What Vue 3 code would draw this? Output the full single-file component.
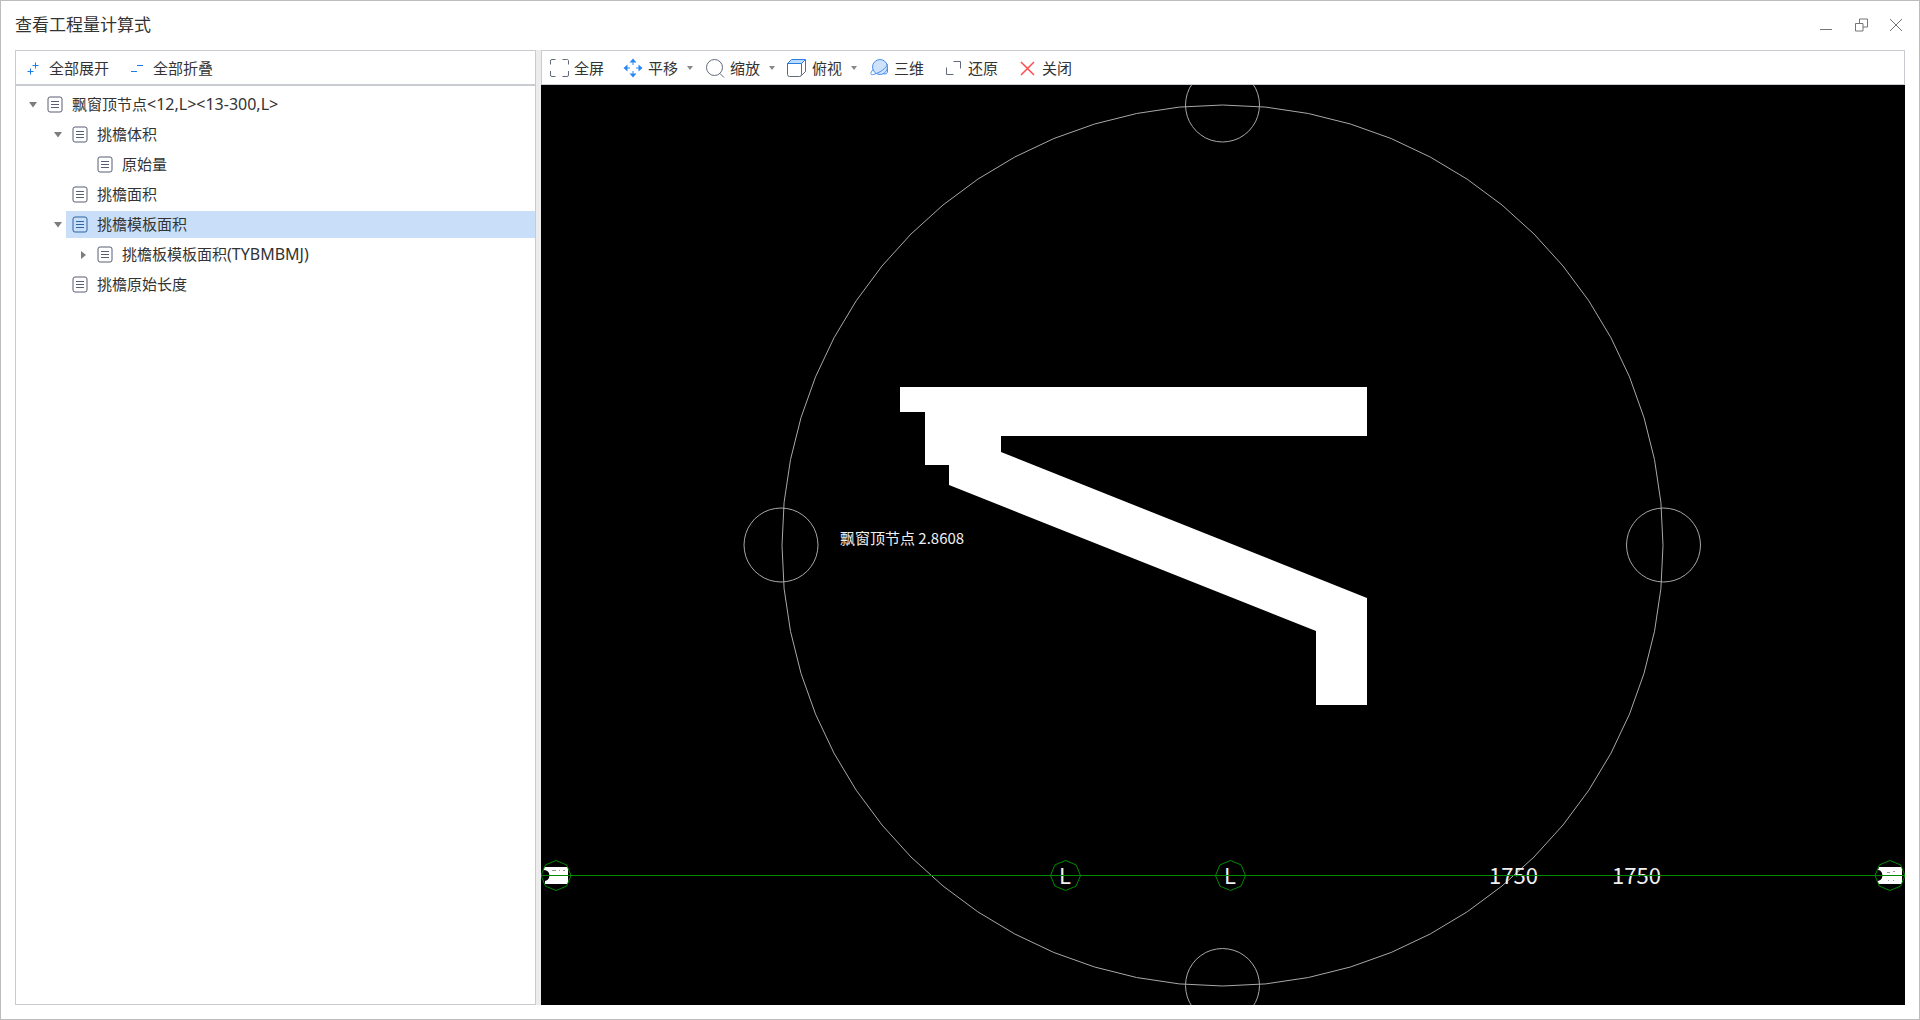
<script setup>
import { ref } from 'vue'

const tree = ref([
  { text: '飘窗顶节点', code: '<12,L><13-300,L>', level: 0, state: 'open' },
  { text: '挑檐体积', level: 1, state: 'open' },
  { text: '原始量', level: 2, state: 'leaf' },
  { text: '挑檐面积', level: 1, state: 'leaf' },
  { text: '挑檐模板面积', level: 1, state: 'open' },
  { text: '挑檐板模板面积', code: '(TYBMBMJ)', level: 2, state: 'closed' },
  { text: '挑檐原始长度', level: 1, state: 'leaf' },
])
const selected = ref(4)

// The viewport draws its orbit rings as regular polygons.
function ring(cx, cy, r, sides) {
  const pts = []
  for (let i = 0; i < sides; i++) {
    const a = (i * 2 * Math.PI) / sides
    pts.push(`${(cx + r * Math.cos(a)).toFixed(1)},${(cy + r * Math.sin(a)).toFixed(1)}`)
  }
  return pts.join(' ')
}

const handles = [
  [681.5, 20],
  [681.5, 900.5],
  [240, 460],
  [1122.5, 460],
]
const axisMarks = [15, 524.5, 689.5, 1349]
</script>

<template>
  <div class="window">
    <header class="titlebar">
      <h1>查看工程量计算式</h1>
      <div class="winbtns">
        <button aria-label="最小化">
          <svg width="14" height="14" viewBox="0 0 14 14"><path d="M1 11.5H13" /></svg>
        </button>
        <button aria-label="还原窗口">
          <svg width="14" height="14" viewBox="0 0 14 14"><path d="M1.500 5.500h7.500v7.500h-7.500zM5.500 5.500v-4.500h8v8h-4.500" /></svg>
        </button>
        <button aria-label="关闭窗口">
          <svg width="14" height="14" viewBox="0 0 14 14"><path d="M1 1L13 13M13 1L1 13" /></svg>
        </button>
      </div>
    </header>

    <main class="body">
      <aside class="side">
        <div class="toolbar">
          <button class="tool">
            <svg class="ico blue" viewBox="0 0 20 20"><path d="M8.500 7.500h6M11.500 4.500v6M3.500 13.500h6M6.500 10.500v6" /></svg>
            全部展开
          </button>
          <button class="tool">
            <svg class="ico blue" viewBox="0 0 20 20"><path d="M9 7.500h6M3 13.500h6" /></svg>
            全部折叠
          </button>
        </div>
        <ul class="tree" role="tree">
          <li
            v-for="(n, i) in tree"
            :key="i"
            role="treeitem"
            :class="['lv' + n.level, { selected: i === selected }]"
            :aria-selected="i === selected"
            @click="selected = i"
          >
            <span class="twist">
              <svg v-if="n.state === 'open'" width="8" height="6" viewBox="0 0 8 6"><path d="M0 0H8L4 5.500Z" /></svg>
              <svg v-else-if="n.state === 'closed'" width="8" height="8" viewBox="0 0 8 8"><path d="M2 0V8L7 4Z" /></svg>
            </span>
            <span class="node">
              <svg class="doc" width="16" height="17" viewBox="0 0 16 17">
                <rect x="1" y="1" width="14" height="15" rx="2" />
                <path d="M4 5.500H12M4 8.500H12M4 11.500H12" />
              </svg>
              <span class="name">{{ n.text }}<span v-if="n.code" class="code">{{ n.code }}</span></span>
            </span>
          </li>
        </ul>
      </aside>

      <section class="view">
        <div class="toolbar">
          <button class="tool">
            <svg class="ico" viewBox="0 0 20 20"><path d="M1.500 6.500V3A1.500 1.500 0 0 1 3 1.500H6.500M13.500 1.500H17.500A1.500 1.500 0 0 1 19.500 3V6.500M19.500 13V17a1.500 1.500 0 0 1-1.500 1.500H13.500M6.500 18.500H3A1.500 1.500 0 0 1 1.500 17V13" /></svg>
            全屏
          </button>
          <button class="tool menu">
            <svg class="ico pan" viewBox="0 0 20 20">
              <path class="f" d="M10 0.500L13.500 4.500H6.500ZM10 19.500L6.500 15.500H13.500ZM0.500 10L4.500 6.500V13.500ZM19.500 10L15.500 13.500V6.500Z" />
              <path d="M10 4v3M10 13v3M4 10h3M13 10h3" />
            </svg>
            平移
            <svg class="drop" viewBox="0 0 6 4"><path d="M0 0H6L3 4Z" /></svg>
          </button>
          <button class="tool menu">
            <svg class="ico" viewBox="0 0 20 20"><circle cx="9.500" cy="9.500" r="8" /><path d="M15 15.500L19 19.500" /></svg>
            缩放
            <svg class="drop" viewBox="0 0 6 4"><path d="M0 0H6L3 4Z" /></svg>
          </button>
          <button class="tool menu">
            <svg class="ico cube" viewBox="0 0 20 20">
              <path d="M0.500 5.500H14.500V16.500a2 2 0 0 1-2 2H2.500a2 2 0 0 1-2-2ZM18.500 2V13.500L14.500 17.500" />
              <path class="lid" d="M0.500 5.500L4.500 1.500H18.500L14.500 5.500Z" />
            </svg>
            俯视
            <svg class="drop" viewBox="0 0 6 4"><path d="M0 0H6L3 4Z" /></svg>
          </button>
          <button class="tool">
            <svg class="ico globe" viewBox="0 0 20 20">
              <circle cx="11" cy="9" r="7.500" />
              <path d="M4 11.500C0 16.500 2 17.500 6 16C11 14.500 17.500 10 18.500 6M18.500 9.500V14Q18 16.500 14.500 16" />
            </svg>
            三维
          </button>
          <button class="tool">
            <svg class="ico" viewBox="0 0 20 20"><path d="M10.500 3.500H17.500V10.500M3.500 9.500V16.500H10.500" /></svg>
            还原
          </button>
          <button class="tool">
            <svg class="ico red" viewBox="0 0 20 20"><path d="M4 4L17 17M17 4L4 17" /></svg>
            关闭
          </button>
        </div>
        <svg class="scene" viewBox="0 0 1364 920" role="img" aria-label="飘窗顶节点">
          <g class="orbit">
            <polygon :points="ring(681.5, 460.5, 440.5, 64)" />
            <polygon v-for="(h, i) in handles" :key="i" :points="ring(h[0], h[1], 37, 40)" />
          </g>
          <path class="solid" d="M359 302H826V351H460V367L826 513V620H775V546L408 400V380H384V327H359Z" />
          <text class="label" x="299" y="459">飘窗顶节点 2.8608</text>
          <path class="stack" d="M3 782H27V799H4V796C8 795 9 792 8 788C7 786 5 785 3 785Z" />
          <path class="stack" d="M1338 782H1361V799H1337V796C1341 795 1342 792 1341 788C1340 786 1339 785 1337 785Z" />
          <path class="stackdots" d="M11 785.500H15M18 785.500H19M22 785.500H24M1346 787.500H1349M1352 786.500H1354M1347 795.500H1348M1352 795.500H1353" />
          <g class="dims">
            <text x="518" y="799">L</text>
            <text x="683" y="799">L</text>
            <text x="948" y="799">1750</text>
            <text x="1071" y="799">1750</text>
          </g>
          <g class="axis">
            <path d="M0 790.500H1364" />
            <polygon v-for="x in axisMarks" :key="x" :points="ring(x, 790.5, 15, 8)" />
          </g>
        </svg>
      </section>
    </main>
  </div>
</template>

<style>
body {
  margin: 0;
  background: #fff;
}
</style>

<style scoped>
.window {
  box-sizing: border-box;
  min-height: 100vh;
  display: flex;
  flex-direction: column;
  padding: 0 14px 14px;
  border: 1px solid #bdbdbd;
  background: #fff;
  color: #333;
  font: 15px/20px "Noto Sans", "Noto Sans CJK SC", sans-serif;
}
button {
  border: 0;
  padding: 0;
  margin: 0;
  background: none;
  color: inherit;
  font: inherit;
}
.titlebar {
  box-sizing: border-box;
  height: 49px;
  padding: 0 2px 2px 0;
  display: flex;
  align-items: center;
  justify-content: space-between;
}
h1 {
  margin: 0;
  font-size: 17px;
  font-weight: 400;
}
.winbtns {
  display: flex;
  gap: 21px;
}
.winbtns button {
  display: flex;
}
.winbtns svg {
  fill: none;
  stroke: #757575;
}
.body {
  flex: 1;
  display: flex;
}
.side {
  flex: none;
  width: 519px;
  border: 1px solid #c8cbcf;
}
.toolbar {
  box-sizing: border-box;
  height: 33px;
  padding-top: 1px;
  display: flex;
  align-items: center;
  gap: 19px;
}
.side .toolbar {
  height: 35px;
  padding-left: 8px;
  border-bottom: 2px solid #c8cbcf;
}
.tool {
  display: flex;
  align-items: center;
  gap: 5px;
  white-space: nowrap;
}
.ico {
  width: 20px;
  height: 20px;
  fill: none;
  stroke: #62697c;
}
.blue {
  stroke: #1f7be8;
}
.red {
  stroke: #ff4d4d;
  stroke-width: 1.5;
}
.pan {
  stroke: #2b86f5;
}
.pan .f {
  fill: #2b86f5;
  stroke: none;
}
.lid {
  fill: #b9dbff;
  stroke: #2b7de0;
}
.globe {
  fill: #cfe2fb;
  stroke: #4a90ee;
}
.globe path {
  fill: none;
}
.drop {
  width: 6px;
  height: 4px;
  margin-left: 4px;
  fill: #888;
}
.view {
  flex: 1;
  min-width: 0;
  display: flex;
  flex-direction: column;
  border-left: 5px solid #ececec;
}
.view .toolbar {
  height: 35px;
  padding-left: 7px;
  border: 1px solid #c8cbcf;
}
.view .menu {
  margin-right: -7px;
}
.scene {
  display: block;
  width: 100%;
  background: #000;
}
.tree {
  margin: 0;
  padding: 3px 0 0;
  list-style: none;
}
.tree li {
  display: flex;
  padding: 2px 0 1px 13px;
}
.tree .lv1 {
  padding-left: 38px;
}
.tree .lv2 {
  padding-left: 63px;
}
.twist {
  width: 12px;
  flex: none;
  display: flex;
  align-items: center;
  fill: #7d7d7d;
}
.node {
  flex: 1;
  height: 27px;
  display: flex;
  align-items: center;
  gap: 9px;
  padding-left: 6px;
}
.name {
  padding-bottom: 2px;
}
.code {
  font-size: 16px;
}
.selected .node {
  background: #c9dff9;
}
.doc {
  fill: none;
  stroke: #585f73;
}
.selected .doc {
  stroke: #2f659f;
}
.orbit {
  fill: none;
  stroke: #a8a8a8;
}
.solid,
.stack {
  fill: #fff;
}
.stackdots {
  stroke: #999;
}
.label {
  fill: #f0f0f0;
  font: 15px "Noto Sans CJK SC", sans-serif;
}
.dims {
  fill: #f0f0f0;
  font: 22px "Noto Sans CJK SC", sans-serif;
}
.axis {
  fill: none;
  stroke: #008a00;
}
</style>
